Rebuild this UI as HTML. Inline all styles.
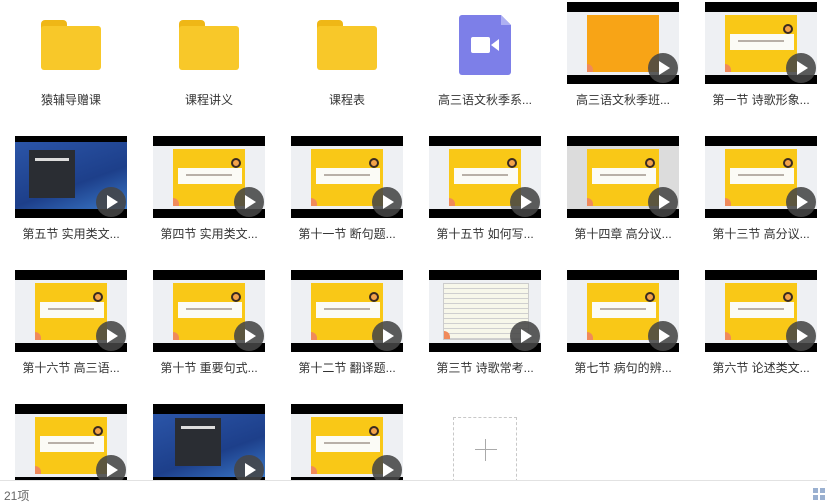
<!DOCTYPE html>
<html><head><meta charset="utf-8"><style>
*{margin:0;padding:0;box-sizing:border-box}
body{width:827px;height:504px;background:#fff;position:relative;overflow:hidden;font-family:"Liberation Sans","Noto Sans CJK SC",sans-serif}
.t{position:absolute;width:112px;height:82px;background:#000;overflow:hidden}
.t .bg{position:absolute;left:0;right:0;top:10px;bottom:9px;background:#eef0f3}
.t .sl{position:absolute;left:20px;width:72px;top:13px;height:57px;background:#f9c817}
.t .sl:before{content:"";position:absolute;left:0;bottom:0;width:6px;height:8px;background:#f08a5a;border-radius:0 6px 0 0}
.t .wb{position:absolute;left:25px;width:64px;top:32px;height:16px;background:#fbfbf6}
.t .wb:after{content:"";position:absolute;left:8px;right:10px;top:6px;height:2px;background:#b8b0a8}
.t .ic{position:absolute;left:78px;top:22px;width:10px;height:10px;border-radius:50%;background:#f3a24a;border:2px solid #3a2a20}
.pl{position:absolute;left:81px;top:51px;width:30px;height:30px;border-radius:50%;background:rgba(70,70,70,.88)}
.pl:after{content:"";position:absolute;left:11px;top:8px;border-left:11px solid #fff;border-top:7px solid transparent;border-bottom:7px solid transparent}
.lb{position:absolute;width:138px;text-align:center;font-size:12px;color:#333;line-height:14px}
.fd{position:absolute;width:60px;height:50px}
.fd .tab{position:absolute;left:0;top:0;width:26px;height:10px;background:#efb716;border-radius:4px 4px 0 0}
.fd .bd{position:absolute;left:0;top:6px;width:60px;height:44px;background:#f8c829;border-radius:3px}
.desk .bg{background:linear-gradient(160deg,#2b55a8,#1d3f8a 60%,#3a78c8)}
.desk .win{position:absolute;left:14px;top:14px;width:46px;height:48px;background:#2a2d33}
.desk .win:before{content:"";position:absolute;left:6px;top:8px;width:34px;height:3px;background:#ddd}
.or .sl{background:#f8a416}
.or .wb{display:none}
.tb .sl{left:14px;width:86px;background:#f7f7ea;border:1px solid #ccc;background-image:repeating-linear-gradient(#f7f7ea 0 4px,#cfcfcf 4px 5px)}
.tb .wb,.tb .ic{display:none}
</style></head><body>

<!-- row 0 -->
<div class="fd" style="left:41px;top:20px"><div class="tab"></div><div class="bd"></div></div>
<div class="fd" style="left:179px;top:20px"><div class="tab"></div><div class="bd"></div></div>
<div class="fd" style="left:317px;top:20px"><div class="tab"></div><div class="bd"></div></div>
<svg style="position:absolute;left:459px;top:15px" width="53" height="60"><path d="M3 0H42L52 10V57a3 3 0 0 1-3 3H3a3 3 0 0 1-3-3V3a3 3 0 0 1 3-3z" fill="#7d7fe8"/><path d="M42 0V10H52z" fill="#aeb0f2"/><rect x="12" y="22" width="19" height="16" rx="2" fill="#fff"/><path d="M32 30l8-6v12z" fill="#fff"/></svg>
<div class="t or" style="left:567px;top:2px"><div class="bg"></div><div class="sl"></div><div class="pl"></div></div>
<div class="t" style="left:705px;top:2px"><div class="bg"></div><div class="sl"></div><div class="wb"></div><div class="ic"></div><div class="pl"></div></div>

<div class="lb" style="left:2px;top:93px">猿辅导赠课</div>
<div class="lb" style="left:140px;top:93px">课程讲义</div>
<div class="lb" style="left:278px;top:93px">课程表</div>
<div class="lb" style="left:416px;top:93px">高三语文秋季系...</div>
<div class="lb" style="left:554px;top:93px">高三语文秋季班...</div>
<div class="lb" style="left:692px;top:93px">第一节 诗歌形象...</div>

<!-- row 1 -->
<div class="t desk" style="left:15px;top:136px"><div class="bg" style="top:6px"></div><div class="win"></div><div class="pl"></div></div>
<div class="t" style="left:153px;top:136px"><div class="bg"></div><div class="sl"></div><div class="wb"></div><div class="ic"></div><div class="pl"></div></div>
<div class="t" style="left:291px;top:136px"><div class="bg"></div><div class="sl"></div><div class="wb"></div><div class="ic"></div><div class="pl"></div></div>
<div class="t" style="left:429px;top:136px"><div class="bg"></div><div class="sl"></div><div class="wb"></div><div class="ic"></div><div class="pl"></div></div>
<div class="t" style="left:567px;top:136px"><div class="bg" style="background:#dcdcdc"></div><div class="sl"></div><div class="wb"></div><div class="ic"></div><div class="pl"></div></div>
<div class="t" style="left:705px;top:136px"><div class="bg"></div><div class="sl"></div><div class="wb"></div><div class="ic"></div><div class="pl"></div></div>

<div class="lb" style="left:2px;top:227px">第五节 实用类文...</div>
<div class="lb" style="left:140px;top:227px">第四节 实用类文...</div>
<div class="lb" style="left:278px;top:227px">第十一节 断句题...</div>
<div class="lb" style="left:416px;top:227px">第十五节 如何写...</div>
<div class="lb" style="left:554px;top:227px">第十四章 高分议...</div>
<div class="lb" style="left:692px;top:227px">第十三节 高分议...</div>

<!-- row 2 -->
<div class="t" style="left:15px;top:270px"><div class="bg"></div><div class="sl"></div><div class="wb"></div><div class="ic"></div><div class="pl"></div></div>
<div class="t" style="left:153px;top:270px"><div class="bg"></div><div class="sl"></div><div class="wb"></div><div class="ic"></div><div class="pl"></div></div>
<div class="t" style="left:291px;top:270px"><div class="bg"></div><div class="sl"></div><div class="wb"></div><div class="ic"></div><div class="pl"></div></div>
<div class="t tb" style="left:429px;top:270px"><div class="bg"></div><div class="sl"></div><div class="pl"></div></div>
<div class="t" style="left:567px;top:270px"><div class="bg"></div><div class="sl"></div><div class="wb"></div><div class="ic"></div><div class="pl"></div></div>
<div class="t" style="left:705px;top:270px"><div class="bg"></div><div class="sl"></div><div class="wb"></div><div class="ic"></div><div class="pl"></div></div>

<div class="lb" style="left:2px;top:361px">第十六节 高三语...</div>
<div class="lb" style="left:140px;top:361px">第十节 重要句式...</div>
<div class="lb" style="left:278px;top:361px">第十二节 翻译题...</div>
<div class="lb" style="left:416px;top:361px">第三节 诗歌常考...</div>
<div class="lb" style="left:554px;top:361px">第七节 病句的辨...</div>
<div class="lb" style="left:692px;top:361px">第六节 论述类文...</div>

<!-- row 3 -->
<div class="t" style="left:15px;top:404px"><div class="bg"></div><div class="sl"></div><div class="wb"></div><div class="ic"></div><div class="pl"></div></div>
<div class="t desk" style="left:153px;top:404px"><div class="bg"></div><div class="win" style="left:22px"></div><div class="pl"></div></div>
<div class="t" style="left:291px;top:404px"><div class="bg"></div><div class="sl"></div><div class="wb"></div><div class="ic"></div><div class="pl"></div></div>
<div style="position:absolute;left:453px;top:417px;width:64px;height:70px;border:1px dashed #c8c8c8"></div>
<div style="position:absolute;left:475px;top:449px;width:22px;height:1px;background:#aaa"></div>
<div style="position:absolute;left:485px;top:439px;width:1px;height:22px;background:#aaa"></div>

<!-- footer -->
<div style="position:absolute;left:0;top:480px;width:827px;height:24px;background:#fff;border-top:1px solid #e2e2e2"></div>
<div style="position:absolute;left:4px;top:487px;font-size:12px;color:#666">21项</div>
<div style="position:absolute;left:813px;top:488px;width:5px;height:5px;background:#9ab0d0"></div>
<div style="position:absolute;left:820px;top:488px;width:5px;height:5px;background:#9ab0d0"></div>
<div style="position:absolute;left:813px;top:495px;width:5px;height:5px;background:#9ab0d0"></div>
<div style="position:absolute;left:820px;top:495px;width:5px;height:5px;background:#9ab0d0"></div>
</body></html>
